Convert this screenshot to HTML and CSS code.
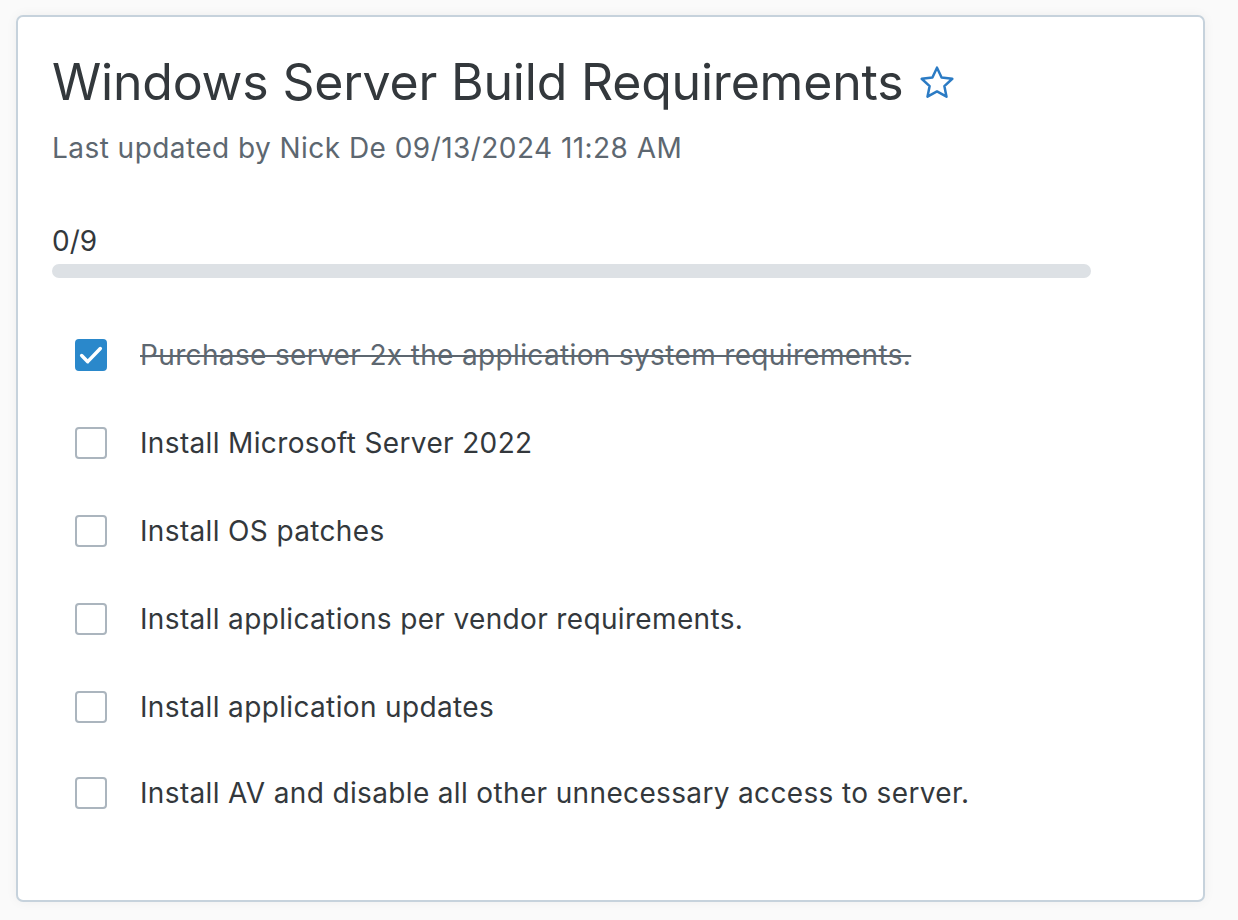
FILE: index.html
```html
<!DOCTYPE html>
<html lang="en">
<head>
    <meta charset="UTF-8">
    <meta name="viewport" content="width=device-width, initial-scale=1.0">
    <title>Checklist</title>
    <link rel="stylesheet" href="styles.css">
</head>
<body>
    <main class="card">
        <header class="card-head">
            <h1>
                Windows Server Build Requirements
                <svg class="star" viewBox="0 0 24 24" width="40" height="40">
                    <path d="M12 2.8l2.75 5.9 6.45.75-4.78 4.4 1.28 6.37L12 17.05l-5.7 3.17 1.28-6.37-4.78-4.4 6.45-.75z" />
                </svg>
            </h1>
            <p class="meta">Last updated by Nick De 09/13/2024 11:28 AM</p>
        </header>

        <section class="progress">
            <span class="count">0/9</span>
            <div class="bar"><div class="fill" style="width: 0%"></div></div>
        </section>

        <ul class="items">
            <li class="item done">
                <span class="box">
                    <svg viewBox="0 0 24 24" width="28" height="28"><path d="M4 12.5l5.2 5.2L20 6.5" /></svg>
                </span>
                <span class="label">Purchase server 2x the application system requirements.</span>
            </li>
            <li class="item">
                <span class="box"></span>
                <span class="label">Install Microsoft Server 2022</span>
            </li>
            <li class="item">
                <span class="box"></span>
                <span class="label">Install OS patches</span>
            </li>
            <li class="item">
                <span class="box"></span>
                <span class="label">Install applications per vendor requirements.</span>
            </li>
            <li class="item">
                <span class="box"></span>
                <span class="label">Install application updates</span>
            </li>
            <li class="item">
                <span class="box"></span>
                <span class="label">Install AV and disable all other unnecessary access to server.</span>
            </li>
        </ul>
    </main>
</body>
</html>
```

FILE: styles.css
```css
body {
    margin: 0;
    padding: 15px 33px 16px 16px;
    font-family: Inter, "Noto Sans", sans-serif;
    background: #fafafa;
    color: #353a3e;
}

.card {
    height: 887px;
    box-sizing: border-box;
    background: #fff;
    border: 2px solid #c6d2dc;
    border-radius: 7px;
    box-shadow: 0 0 12px rgba(0, 0, 0, 0.05);
    padding: 33px 0 0 34px;
}

.card-head {
    h1 {
        margin: 0;
        font-size: 50px;
        font-weight: 400;
        line-height: 64px;
        letter-spacing: -0.2px;
        color: #33383c;
        display: flex;
        align-items: center;
        gap: 14px;
    }

    .star {
        fill: none;
        stroke: #2b7bc4;
        stroke-width: 1.5;
        stroke-linejoin: round;
        margin-top: 2px;
    }

    .meta {
        margin: 17px 0 0;
        font-size: 28px;
        line-height: 34px;
        letter-spacing: 0.45px;
        color: #5d6770;
    }
}

.progress {
    margin-top: 59px;
    width: 1039px;

    .count {
        display: block;
        font-size: 28px;
        line-height: 34px;
        color: #33383c;
    }

    .bar {
        margin-top: 6px;
        height: 14px;
        border-radius: 999px;
        background: #dde1e5;
        overflow: hidden;
    }

    .fill {
        height: 100%;
        background: #2a8ad0;
    }
}

.items {
    list-style: none;
    margin: 55px 0 0;
    padding: 0 0 0 23px;

    .item {
        display: flex;
        align-items: center;
        gap: 33px;
        height: 88px;
    }

    .item:first-child {
        height: 44px;
        margin-bottom: 22px;
    }

    .item:last-child {
        height: 84px;
    }

    .box {
        width: 32px;
        height: 32px;
        box-sizing: border-box;
        border: 2px solid #abb5be;
        border-radius: 4px;
        display: flex;
        align-items: center;
        justify-content: center;
        flex-shrink: 0;
    }

    .label {
        font-size: 28px;
        line-height: 34px;
        letter-spacing: 0.35px;
        color: #33383c;
    }

    .done {
        .box {
            background: #2a88cb;
            border-color: #2a88cb;
        }

        svg {
            fill: none;
            stroke: #fff;
            stroke-width: 3;
            stroke-linecap: round;
            stroke-linejoin: round;
        }

        .label {
            color: #5d6770;
            text-decoration: line-through;
            text-decoration-thickness: 2px;
        }
    }
}
```
